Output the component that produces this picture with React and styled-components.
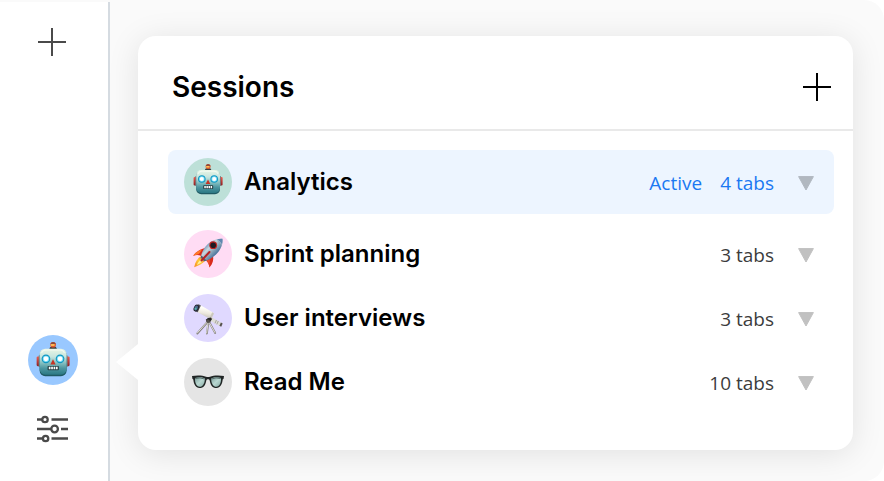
import React, { useState } from 'react';
import styled, { createGlobalStyle } from 'styled-components';

const GlobalStyle = createGlobalStyle`
  * {
    box-sizing: border-box;
  }

  body {
    margin: 0;
    background-color: #fff;
    font-family: 'Inter', sans-serif;
  }
`;

const Page = styled.div`
  display: flex;
  min-height: 100vh;
  overflow: hidden;
  background-color: #fafafa;
  border-radius: 0 20px 20px 0;
`;

const Sidebar = styled.nav`
  display: flex;
  flex-direction: column;
  align-items: center;
  justify-content: space-between;
  flex: none;
  width: 110px;
  margin-top: 2px;
  padding: 24px 2px 36px 0;
  background-color: #fff;
  border-right: 2px solid #d5dbe1;
  z-index: 1;
`;

const SidebarBottom = styled.div`
  display: flex;
  flex-direction: column;
  align-items: center;
  gap: 28px;
`;

const IconButton = styled.button`
  display: flex;
  padding: 0;
  border: none;
  background: none;
  color: ${({ $color }) => $color};
  cursor: pointer;
`;

const Main = styled.main`
  flex: 1;
  min-width: 0;
  padding: 36px 31px 31px 28px;
`;

const Panel = styled.section`
  position: relative;
  background-color: #fff;
  border-radius: 18px;
  box-shadow: 0 4px 32px rgba(0, 0, 0, 0.1);
  z-index: 2;
`;

const Arrow = styled.span`
  position: absolute;
  right: 100%;
  bottom: 70px;
  width: 22px;
  height: 36px;
  background-color: #fff;
  clip-path: polygon(100% 0, 0 50%, 100% 100%);
`;

const Header = styled.header`
  display: flex;
  align-items: center;
  justify-content: space-between;
  height: 95px;
  padding: 8px 19px 0 34px;
  border-bottom: 2px solid #e9e9e9;
`;

const Title = styled.h1`
  margin: 0;
  font-size: 28px;
  font-weight: 600;
  line-height: 36px;
`;

const SessionList = styled.ul`
  margin: 0;
  padding: 19px 19px 36px 30px;
  list-style: none;
`;

const SessionRow = styled.li`
  display: flex;
  align-items: center;
  height: 64px;
  margin-bottom: ${({ $active }) => ($active ? '8px' : '0')};
  padding: 0 20px 0 16px;
  border-radius: 8px;
  background-color: ${({ $active }) => ($active ? '#edf5ff' : 'transparent')};
`;

const Avatar = styled.span`
  display: flex;
  flex: none;
  width: ${({ $size }) => $size}px;
  height: ${({ $size }) => $size}px;
  border-radius: 50%;
  background-color: ${({ $color }) => $color};
`;

const SessionName = styled.span`
  flex: 1;
  margin-left: 12px;
  font-size: 24px;
  font-weight: 600;
  line-height: 32px;
`;

const Meta = styled.span`
  display: flex;
  gap: 18px;
  margin-right: 24px;
  padding-top: 2px;
  font-family: 'Open Sans', sans-serif;
  font-size: 19px;
  line-height: 24px;
  color: ${({ $active }) => ($active ? '#1a78f2' : '#3c3c3c')};
`;

const PlusIcon = () => (
  <svg width="32" height="32" viewBox="0 0 32 32" stroke="currentColor" strokeWidth="2">
    <path d="M1 16H29M15 2V30" />
  </svg>
);

const SlidersIcon = () => (
  <svg width="32" height="32" viewBox="0 0 32 32" fill="none" stroke="currentColor" strokeWidth="2.3">
    <path d="M0 6.5H5M14.5 6.5H31M0 16H14M24 16H31M0 25.5H5M14.5 25.5H31" />
    <circle cx="8" cy="6.5" r="2.7" />
    <circle cx="17.6" cy="16" r="3.3" />
    <circle cx="8.6" cy="25.5" r="2.7" />
  </svg>
);

const TriangleIcon = () => (
  <svg width="16" height="20" viewBox="0 0 16 20">
    <path d="M0.6 4.6H15.4L8 18Z" fill="currentColor" stroke="currentColor" strokeLinejoin="round" />
  </svg>
);

const Robot = ({ viewBox = '0 0 48 48' }) => (
  <svg width="100%" height="100%" viewBox={viewBox}>
    <defs>
      <linearGradient id="robotHead" x1="0" y1="0" x2="0" y2="1">
        <stop offset="0" stopColor="#eaf6e4" />
        <stop offset="0.3" stopColor="#c8e6df" />
        <stop offset="0.55" stopColor="#84bfc0" />
        <stop offset="0.75" stopColor="#4d96a0" />
        <stop offset="1" stopColor="#2b7884" />
      </linearGradient>
      <linearGradient id="robotEar" x1="0" y1="0" x2="0" y2="1">
        <stop offset="0" stopColor="#f05a4c" />
        <stop offset="1" stopColor="#8c1f24" />
      </linearGradient>
    </defs>
    <rect x="9.6" y="19" width="4" height="8.4" rx="1" fill="url(#robotEar)" />
    <rect x="34.6" y="19" width="4" height="8.4" rx="1" fill="url(#robotEar)" />
    <rect x="11.4" y="18" width="1.2" height="10" fill="#6e8286" />
    <rect x="35.6" y="18" width="1.2" height="10" fill="#6e8286" />
    <path d="M20.8 12.6C20.8 10.8 22.2 10 24.1 10S27.4 10.8 27.4 12.6Z" fill="#38403f" />
    <circle cx="24.1" cy="8.6" r="2.5" fill="#e0562f" />
    <path d="M21.8 8C22.2 5.6 26 5.6 26.4 8Z" fill="#8a4a3d" />
    <path d="M22.2 8.8H25.4" stroke="#ffd05a" strokeWidth="1.4" />
    <rect x="12.2" y="12.8" width="23.8" height="23.4" rx="5" fill="#1f5a64" />
    <rect x="12.2" y="12" width="23.8" height="23" rx="5" fill="url(#robotHead)" />
    <path d="M14 16Q14.5 13.2 18 13.2H30Q33.5 13.2 34 16" fill="none" stroke="#fff" strokeOpacity="0.6" />
    {[17.8, 30.2].map((x) => (
      <g key={x}>
        <circle cx={x} cy="21" r="3.8" fill="#1096c2" />
        <circle cx={x} cy="21" r="2.8" fill="#7fe2fa" />
        <circle cx={x} cy="21" r="2" fill="#fff" />
      </g>
    ))}
    <path d="M24 21.4L26.3 26H21.7Z" fill="#c73425" />
    <rect x="19.2" y="27.2" width="10" height="3.8" rx="0.8" fill="#243f43" />
    <path d="M20.3 29.1H28.2" stroke="#fff" strokeWidth="2.2" strokeDasharray="1.5 0.6" />
  </svg>
);

const Rocket = () => (
  <svg width="100%" height="100%" viewBox="0 0 48 48">
    <defs>
      <linearGradient id="rocketBody" x1="0" y1="0" x2="1" y2="1">
        <stop offset="0.2" stopColor="#477ba9" />
        <stop offset="0.4" stopColor="#c9d6de" />
        <stop offset="0.54" stopColor="#8fa7b8" />
        <stop offset="0.78" stopColor="#265a90" />
      </linearGradient>
      <linearGradient id="rocketFlame" x1="1" y1="0" x2="0" y2="1">
        <stop offset="0" stopColor="#e2571e" />
        <stop offset="0.5" stopColor="#ffca32" />
        <stop offset="1" stopColor="#f5892a" />
      </linearGradient>
    </defs>
    <path d="M17.5 26C13.5 28 11 32 10.2 37.2C15 35.4 19.4 33.4 21.4 30Z" fill="url(#rocketFlame)" />
    <path d="M17.4 29C15 31 13.5 33 13 35C15.4 33.8 17.8 32.5 19 30.5Z" fill="#fff19a" />
    <path d="M23 17.5C17 18.8 12 21.5 9.2 25.8C12 24.8 14.6 24.8 17.2 26Z" fill="#d92c1c" />
    <path d="M9.2 25.8C11.5 22.5 14.5 20.7 18 19.6L15 24Z" fill="#ff7a28" />
    <path d="M29 25.5C29.8 30 28.8 34 25.4 37.4C25 34 24 32 21.5 30Z" fill="#d92c1c" />
    <path d="M25.4 37.4C25.2 34.8 24.2 32.4 22.4 30.8L26 29Z" fill="#ef4c2a" />
    <path d="M38.4 8.7C31 8.2 24.5 12 20.8 17.5C18.7 20.8 17 24.6 16.6 27.7L20.3 31.3C24.2 30 28.5 28 32 24.5C36.4 20 39.2 14.8 38.4 8.7Z" fill="url(#rocketBody)" />
    <path d="M38.4 8.7C36 8.5 34.3 8.8 32.7 9.4L37.6 14.6C38.4 12.6 38.6 10.7 38.4 8.7Z" fill="#5f87b0" />
    <path d="M32.7 9.4Q36.3 11.3 37.6 14.6" fill="none" stroke="#b1c5d5" strokeWidth="0.8" />
    <path d="M16.6 27.7L20.3 31.3L22.5 30.5L17.3 25.3Z" fill="#53626f" />
    <path d="M25.5 22L17.5 30.5" stroke="#b82121" strokeWidth="2" strokeLinecap="round" />
    <circle cx="29.2" cy="15.2" r="3.9" fill="#c0221f" />
    <circle cx="29.2" cy="15.2" r="2.8" fill="#1f1a24" />
  </svg>
);

const Telescope = () => (
  <svg width="100%" height="100%" viewBox="0 0 48 48">
    <defs>
      <linearGradient id="telescopeTube" x1="0.6" y1="0" x2="0.4" y2="1">
        <stop offset="0.25" stopColor="#fffef8" />
        <stop offset="0.6" stopColor="#ece8dd" />
        <stop offset="1" stopColor="#b8b5ad" />
      </linearGradient>
    </defs>
    <g strokeLinecap="round" fill="none">
      <path d="M23.5 28L13.3 39.5M24.4 28L22.9 39.5M25.2 28L31.2 39" stroke="#85827d" strokeWidth="1.9" />
      <path d="M23.2 28L13.3 39M24.1 28L22.7 39M25 28L30.9 38.5" stroke="#dedcd5" strokeWidth="1" />
    </g>
    <path d="M26 22.2L38.2 29.3L36.7 32.5L24.7 26Z" fill="#deddd7" />
    <path d="M32.4 26L31 29.4M34.3 27L32.8 30.4" stroke="#8f8c87" strokeWidth="0.7" />
    <path d="M36.9 28.4L38.7 29.5L37.2 32.8L35.4 31.7Z" fill="#57534f" />
    <path d="M21.8 25.5L26.8 22.8L28.2 24.6L26 28.4L22.8 28.4Z" fill="#33312f" />
    <path d="M15.8 10.8L29.3 18.8L26.2 25L12.8 17.8Z" fill="url(#telescopeTube)" />
    <path d="M28.2 18.2L30 19.4L27 25.6L25.2 24.5Z" fill="#cbc8be" />
    <path d="M23.4 24.2L26.8 23.6L27.6 25.4L24.4 27.4Z" fill="#282725" />
    <circle cx="24.2" cy="27.2" r="1.6" fill="#55514c" />
    <path d="M10.6 12.8L14.6 10.2L16.9 11.4L13.7 18.3L11 17.2Z" fill="#54545c" />
    <ellipse cx="12.3" cy="14.1" rx="2.5" ry="3.6" transform="rotate(26 12.3 14.1)" fill="#25262e" />
    <ellipse cx="12.1" cy="14" rx="1.6" ry="2.6" transform="rotate(26 12.1 14)" fill="#4b6c92" />
    <circle cx="11.6" cy="14.8" r="1" fill="#51b9a5" />
  </svg>
);

const Glasses = () => (
  <svg width="100%" height="100%" viewBox="0 0 48 48">
    <defs>
      <linearGradient id="glassesLens" x1="0" y1="0" x2="1" y2="1">
        <stop offset="0" stopColor="#7c9d9a" />
        <stop offset="0.5" stopColor="#b9d7d1" />
        <stop offset="1" stopColor="#86aaa4" />
      </linearGradient>
    </defs>
    <path
      d="M8 18C13 17 19 17.4 22 18.7Q24 19.4 26 18.7C29 17.4 35 17 40 18L39.6 20.8L38.7 21.6C38.2 26.5 36.2 30.1 32.5 30.1C28.4 30.1 26.4 27 25.7 22.5C25.3 20.8 22.7 20.8 22.3 22.5C21.6 27 19.6 30.1 15.5 30.1C11.8 30.1 9.8 26.5 9.3 21.6L8.4 20.8Z"
      fill="#202525"
    />
    <path d="M11 20C14 18.9 18.5 19 20.9 20.4C20.8 25.5 18.8 28.7 15.6 28.7C12.6 28.7 10.8 25.4 11 20Z" fill="url(#glassesLens)" />
    <path d="M37 20C34 18.9 29.5 19 27.1 20.4C27.2 25.5 29.2 28.7 32.4 28.7C35.4 28.7 37.2 25.4 37 20Z" fill="url(#glassesLens)" />
    <path d="M11.2 20.6Q16 19 20.7 21M36.8 20.6Q32 19 27.3 21" fill="none" stroke="#586f6d" />
  </svg>
);

const sessions = [
  { name: 'Analytics', tabs: 4, color: '#bde0d8', Icon: Robot },
  { name: 'Sprint planning', tabs: 3, color: '#ffdcf4', Icon: Rocket },
  { name: 'User interviews', tabs: 3, color: '#e0d9ff', Icon: Telescope },
  { name: 'Read Me', tabs: 10, color: '#e5e5e5', Icon: Glasses },
];

export default function App() {
  const [active] = useState('Analytics');

  return (
    <Page>
      <GlobalStyle />
      <Sidebar>
        <IconButton $color="#4a4a4a" aria-label="New tab">
          <PlusIcon />
        </IconButton>
        <SidebarBottom>
          <IconButton aria-label="Sessions">
            <Avatar $size={50} $color="#99c8ff">
              <Robot viewBox="2 0 44 44" />
            </Avatar>
          </IconButton>
          <IconButton $color="#4a4a4a" aria-label="Settings">
            <SlidersIcon />
          </IconButton>
        </SidebarBottom>
      </Sidebar>
      <Main>
        <Panel>
          <Arrow />
          <Header>
            <Title>Sessions</Title>
            <IconButton $color="#000" aria-label="New session">
              <PlusIcon />
            </IconButton>
          </Header>
          <SessionList>
            {sessions.map(({ name, tabs, color, Icon }) => (
              <SessionRow key={name} $active={name === active}>
                <Avatar $size={48} $color={color}>
                  <Icon />
                </Avatar>
                <SessionName>{name}</SessionName>
                <Meta $active={name === active}>
                  {name === active && <span>Active</span>}
                  <span>{tabs} tabs</span>
                </Meta>
                <IconButton $color={name === active ? '#b1b8c0' : '#c1c1c1'} aria-label={`Show ${name} tabs`}>
                  <TriangleIcon />
                </IconButton>
              </SessionRow>
            ))}
          </SessionList>
        </Panel>
      </Main>
    </Page>
  );
}
